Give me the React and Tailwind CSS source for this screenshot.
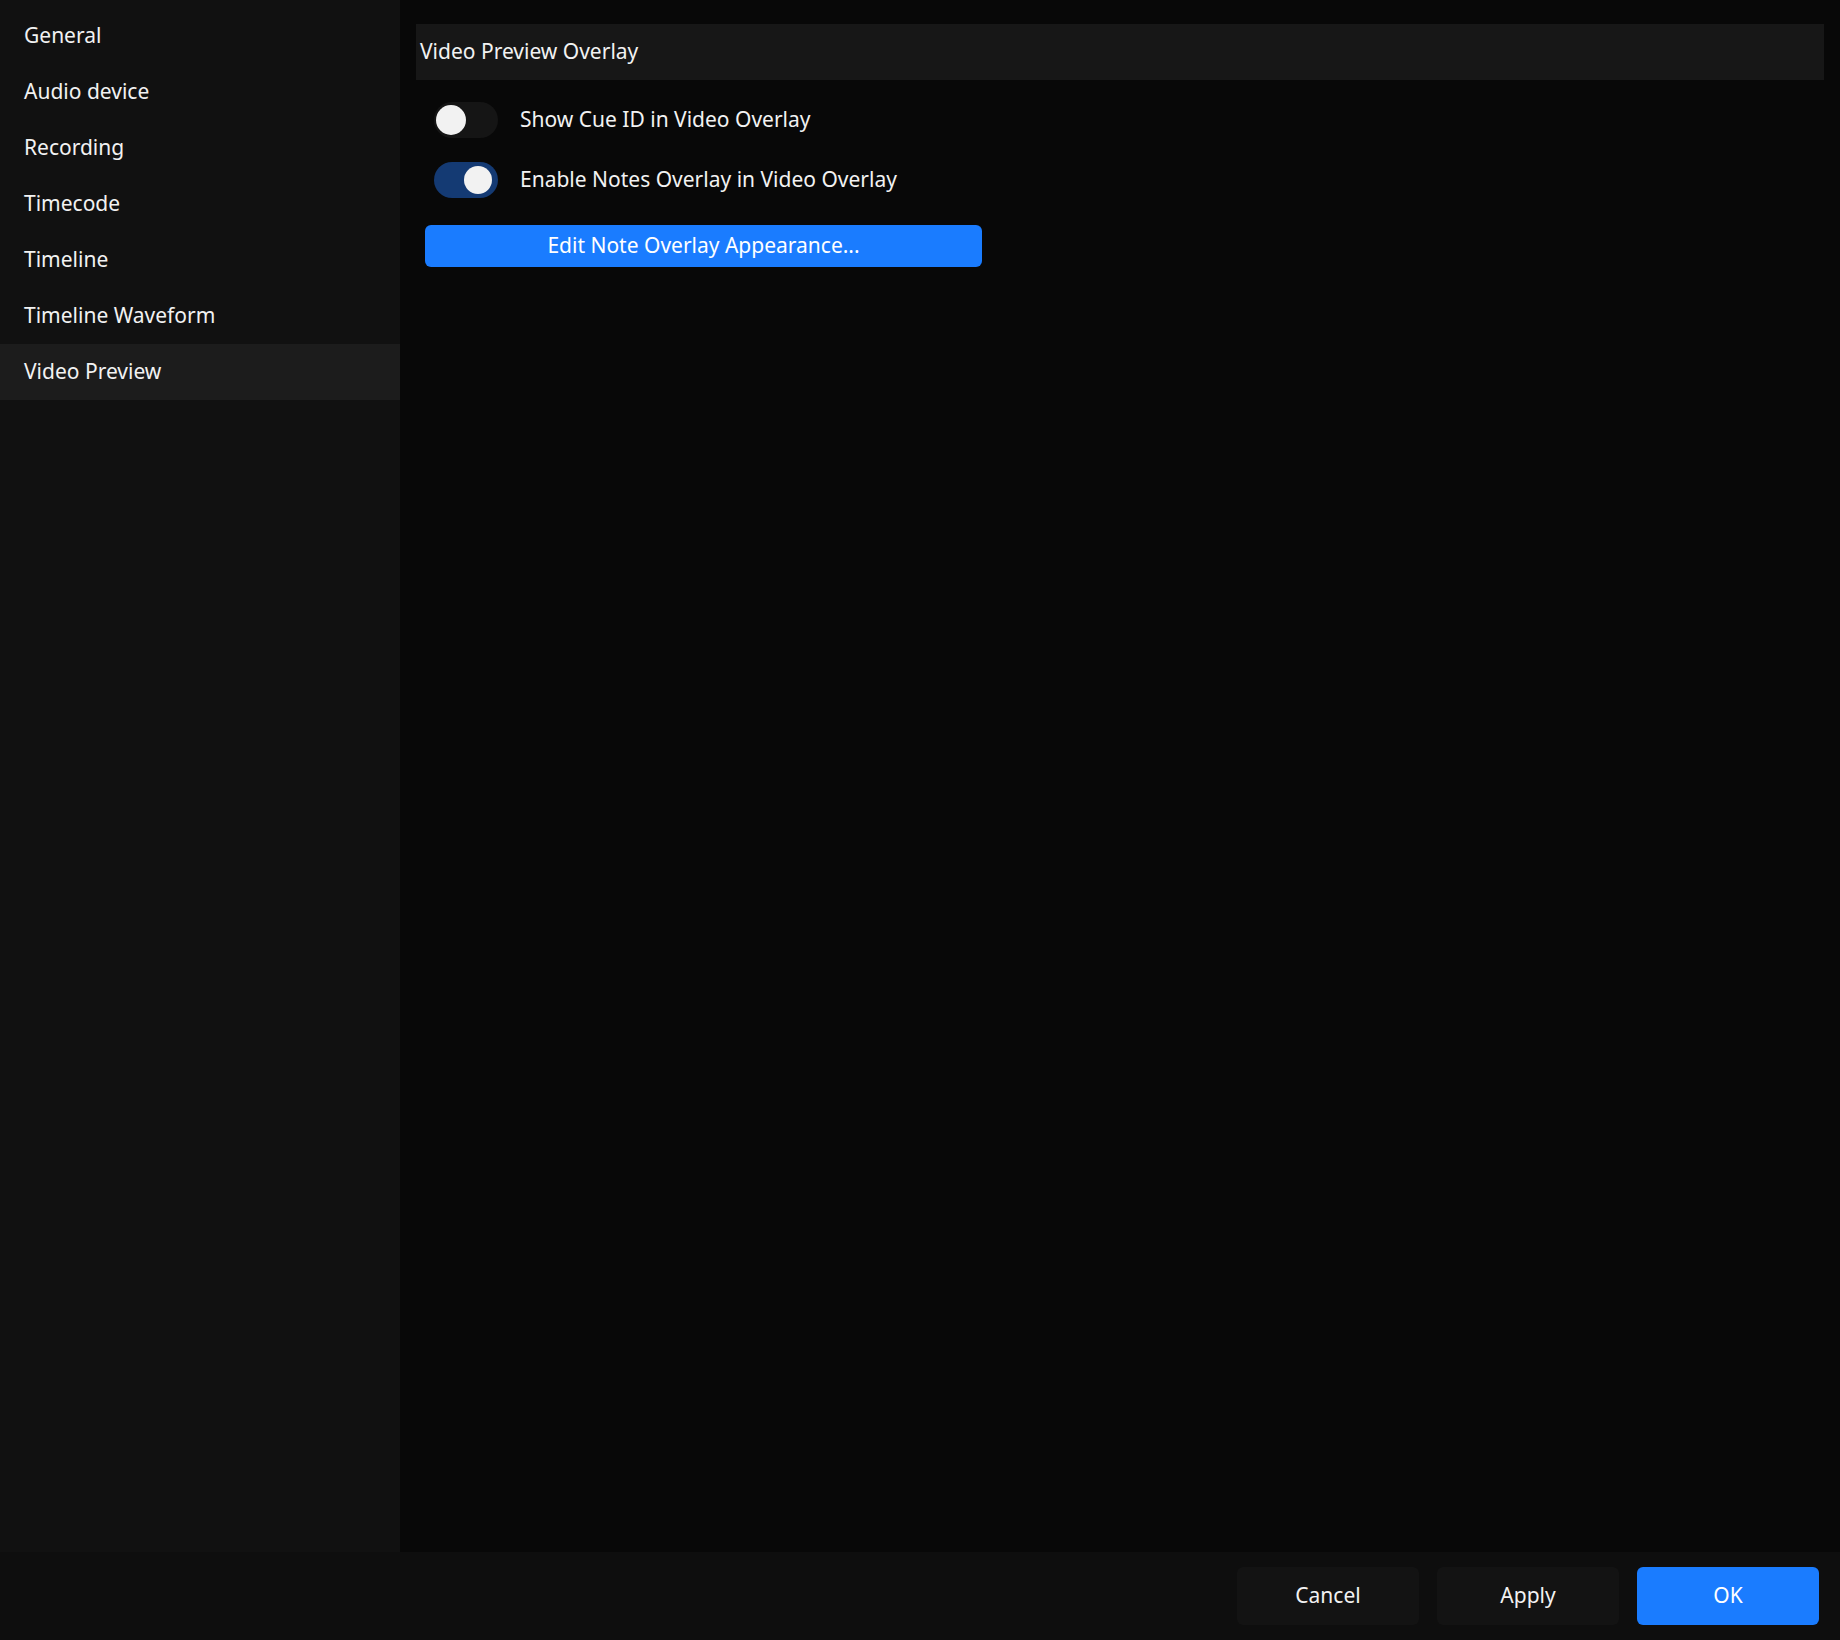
export default function App() {
  const items = ["General","Audio device","Recording","Timecode","Timeline","Timeline Waveform","Video Preview"];
  return (
    <div className="w-[1840px] h-[1640px] flex flex-col bg-[#080808] text-[#f2f2f2] text-[21px]" style={{fontFamily:'"Noto Sans", sans-serif'}}>
      <div className="flex flex-1 min-h-0">
        <div className="w-[400px] bg-[#111111] pt-2">
          {items.map(t => (
            <div key={t} className={`h-[56px] flex items-center pl-6 ${t==="Video Preview" ? "bg-[#1c1c1c]" : ""}`}>{t}</div>
          ))}
        </div>
        <div className="flex-1 pt-6 pl-4 pr-4">
          <div className="h-[56px] bg-[#171717] flex items-center pl-1">Video Preview Overlay</div>
          <div className="mt-5 pl-[18px] flex items-center gap-[22px] h-[40px]">
            <div className="w-[64px] h-[36px] rounded-full bg-[#151515] flex items-center pl-[2px]">
              <div className="w-[30px] h-[30px] rounded-full bg-[#f2f2f2]"></div>
            </div>
            <span>Show Cue ID in Video Overlay</span>
          </div>
          <div className="mt-5 pl-[18px] flex items-center gap-[22px] h-[40px]">
            <div className="w-[64px] h-[36px] rounded-full bg-[#143a73] flex items-center justify-end pr-[6px]">
              <div className="w-[28px] h-[28px] rounded-full bg-[#f2f2f2]"></div>
            </div>
            <span>Enable Notes Overlay in Video Overlay</span>
          </div>
          <div className="mt-[25px] ml-[9px] w-[557px] h-[42px] rounded-[6px] bg-[#1a7cff] flex items-center justify-center text-white">Edit Note Overlay Appearance...</div>
        </div>
      </div>
      <div className="h-[88px] bg-[#0e0e0e] flex items-center justify-end gap-[18px] pr-[21px]">
        <div className="w-[182px] h-[58px] rounded-[6px] bg-[#131313] flex items-center justify-center">Cancel</div>
        <div className="w-[182px] h-[58px] rounded-[6px] bg-[#131313] flex items-center justify-center">Apply</div>
        <div className="w-[182px] h-[58px] rounded-[6px] bg-[#1a7cff] flex items-center justify-center text-white">OK</div>
      </div>
    </div>
  );
}
